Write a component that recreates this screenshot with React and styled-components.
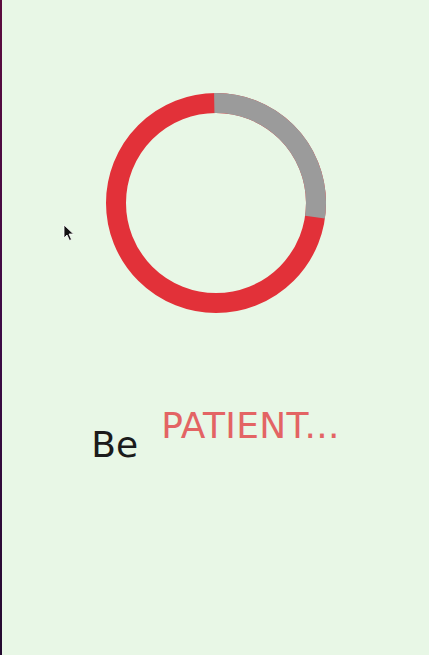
import React from "react";
import styled, { createGlobalStyle } from "styled-components";

const GlobalStyle = createGlobalStyle`
  html, body {
    margin: 0;
    padding: 0;
    height: 100%;
    background: #e8f7e6;
  }
  #root {
    height: 100%;
  }
`;

const RADIUS = 100;
const CIRC = 2 * Math.PI * RADIUS;

// gray part of the ring, in degrees, starting just left of 12 o'clock
const GRAY_START = -91;
const GRAY_SWEEP = 99;

export default function App() {
  const grayLen = (GRAY_SWEEP / 360) * CIRC;

  return (
    <>
      <GlobalStyle />
      <Window>
        <EdgeStrip />
        <Content>
          <Ring viewBox="0 0 220 220" width="220" height="220">
            <circle cx="110" cy="110" r={RADIUS} fill="none" stroke="#e23139" strokeWidth="20" />
            <circle
              cx="110"
              cy="110"
              r={RADIUS}
              fill="none"
              stroke="#9b9b9b"
              strokeWidth="20"
              strokeDasharray={`${grayLen} ${CIRC}`}
              transform={`rotate(${GRAY_START} 110 110)`}
            />
          </Ring>
          <Message>
            <Word>Be</Word>
            <Shout>PATIENT...</Shout>
          </Message>
        </Content>
        <Pointer viewBox="0 0 12 18" width="12" height="18">
          <path d="M1 1 L1 14 L4 11 L6.5 16.5 L8.5 15.5 L6 10 L10.5 10 Z" fill="#111" stroke="#fff" strokeWidth="0.8" />
        </Pointer>
      </Window>
    </>
  );
}

const Window = styled.div`
  position: relative;
  display: flex;
  min-height: 100vh;
  font-family: "DejaVu Sans", "Open Sans", sans-serif;
`;

const EdgeStrip = styled.div`
  width: 2px;
  flex-shrink: 0;
  background: linear-gradient(180deg, #5c0b3e 0%, #3d0a46 50%, #240a30 100%);
`;

const Content = styled.main`
  flex: 1;
  display: flex;
  flex-direction: column;
  align-items: center;
  padding-top: 93px;
`;

const Ring = styled.svg`
  display: block;
`;

const Message = styled.div`
  display: flex;
  align-items: flex-end;
  gap: 23px;
  margin-top: 95px;
  line-height: 1;
  font-size: 36px;
`;

const Word = styled.span`
  color: #1b1b1b;
`;

const Shout = styled.span`
  color: #e36464;
  margin-bottom: 19px;
  letter-spacing: 0.3px;
`;

const Pointer = styled.svg`
  position: absolute;
  left: 63px;
  top: 224px;
`;
